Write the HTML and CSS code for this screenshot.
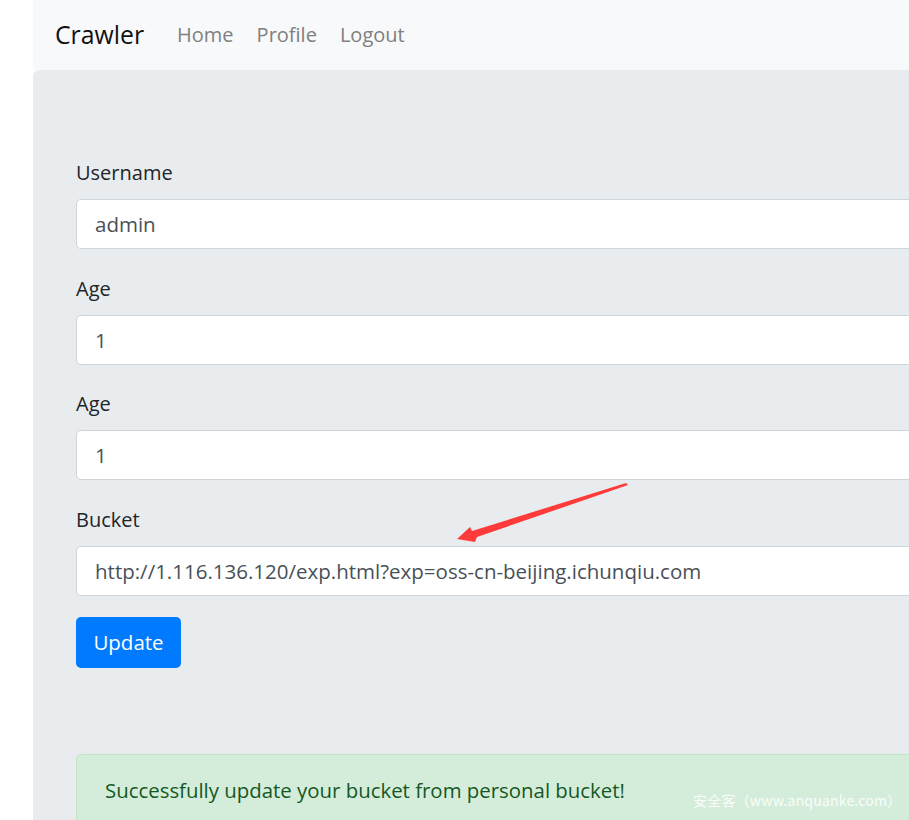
FILE: index.html
```html
<!DOCTYPE html>
<html lang="en">
<head>
<meta charset="utf-8">
<title>Crawler</title>
<link rel="stylesheet" href="styles.css">
</head>
<body>
<div class="page">
  <nav class="navbar">
    <a class="brand" href="#">Crawler</a>
    <ul class="nav">
      <li><a href="#">Home</a></li>
      <li><a href="#">Profile</a></li>
      <li><a href="#">Logout</a></li>
    </ul>
  </nav>
  <main class="jumbotron">
    <form class="form">
      <div class="group">
        <label>Username</label>
        <input class="control" type="text" value="admin">
      </div>
      <div class="group">
        <label>Age</label>
        <input class="control" type="text" value="1">
      </div>
      <div class="group">
        <label>Age</label>
        <input class="control" type="text" value="1">
      </div>
      <div class="group last">
        <label>Bucket</label>
        <input class="control" type="text" value="http://1.116.136.120/exp.html?exp=oss-cn-beijing.ichunqiu.com">
      </div>
      <button type="button" class="btn">Update</button>
    </form>
    <div class="alert">Successfully update your bucket from personal bucket!</div>
  </main>
</div>
<svg class="arrow" width="909" height="820" viewBox="0 0 909 820">
  <polygon points="457,539 470,527 472,531 626,483 628,485 477,537 475,542" fill="#ff3a3a"/>
</svg>
<div class="watermark">安全客（www.anquanke.com）</div>
</body>
</html>
```
FILE: styles.css
```css
html, body {
  margin: 0;
  padding: 0;
  overflow: hidden;
  background: #fff;
}
body {
  font-family: "Open Sans", "Noto Sans", "Liberation Sans", sans-serif;
  color: #212529;
  width: 909px;
  height: 820px;
  position: relative;
}
.page {
  padding-left: 33px;
  width: 1100px;
}
.navbar {
  height: 70px;
  background: #f8f9fa;
  display: flex;
  align-items: center;
  padding-left: 22px;
}
.brand {
  font-size: 24.8px;
  color: #111;
  text-decoration: none;
  margin-right: 21.5px;
  position: relative;
  top: -1px;
}
.nav {
  list-style: none;
  display: flex;
  margin: 0;
  padding: 0;
}
.nav a {
  display: block;
  font-size: 20px;
  color: #808080;
  text-decoration: none;
  padding: 0 11.5px;
  position: relative;
  top: -1px;
}
.jumbotron {
  background: #e9ecef;
  border-top-left-radius: 6px;
  padding: 88px 0 0 43px;
  height: 800px;
}
.group {
  display: flex;
  flex-direction: column;
  margin-bottom: 24.67px;
}
.group.last {
  margin-bottom: 21px;
}
label {
  font-size: 20px;
  line-height: 30px;
  height: 30px;
  margin-bottom: 11px;
}
.control {
  box-sizing: border-box;
  height: 50px;
  border: 1px solid #ced4da;
  border-radius: 5px;
  background: #fff;
  padding: 0 18px;
  font-family: inherit;
  font-size: 20.5px;
  color: #495057;
  outline: none;
}
.btn {
  box-sizing: border-box;
  width: 105px;
  height: 51px;
  border: none;
  border-radius: 5px;
  background: #007bff;
  color: #fff;
  font-family: inherit;
  font-size: 20.5px;
  padding: 0;
}
.alert {
  box-sizing: border-box;
  margin-top: 86px;
  height: 90px;
  background: #d4edda;
  border: 1px solid #c3e6cb;
  border-radius: 5px;
  color: #155724;
  font-size: 20.4px;
  line-height: 30px;
  padding: 20px 28px;
}
.arrow {
  position: absolute;
  left: 0;
  top: 0;
  pointer-events: none;
}
.watermark {
  position: absolute;
  left: 693px;
  top: 790px;
  font-family: "Noto Sans CJK SC", sans-serif;
  font-size: 14px;
  letter-spacing: 0.2px;
  color: rgba(255,255,255,0.9);
}
```
